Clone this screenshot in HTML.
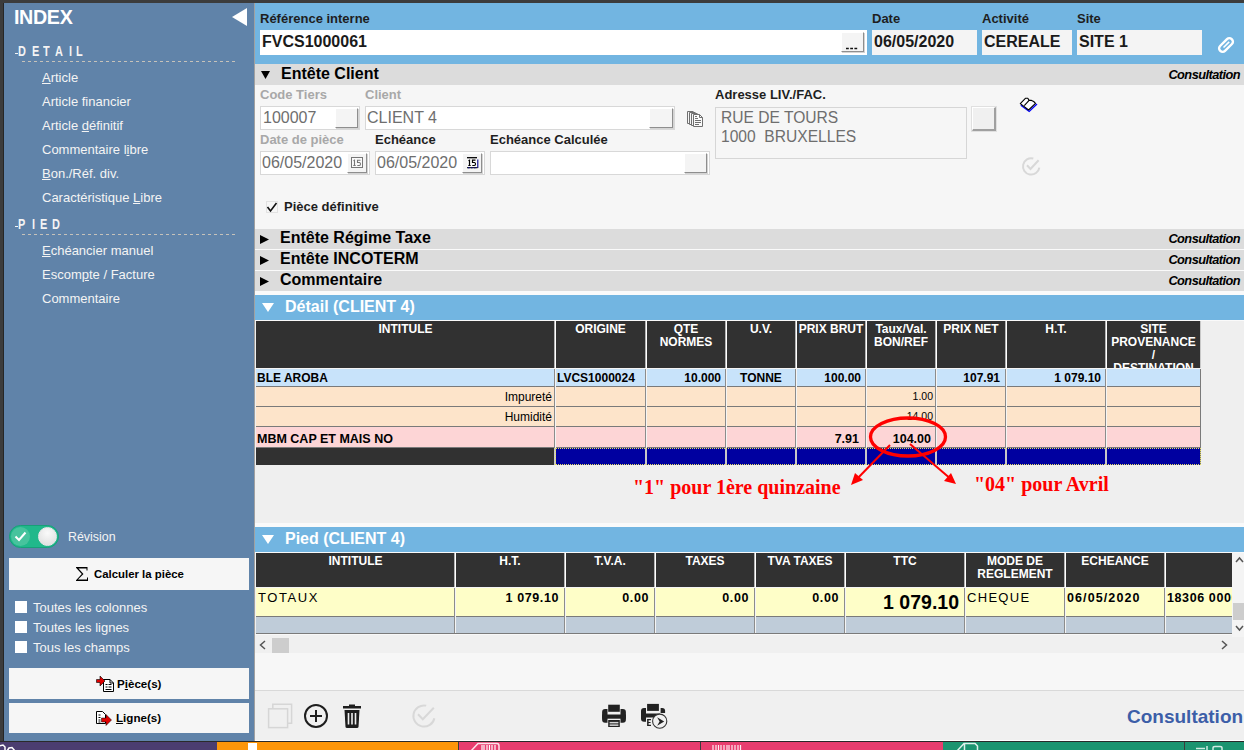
<!DOCTYPE html>
<html><head><meta charset="utf-8">
<style>
*{margin:0;padding:0;box-sizing:border-box}
html,body{width:1244px;height:750px;overflow:hidden;background:#3c3c3c;font-family:"Liberation Sans",sans-serif}
.a{position:absolute}
.t{position:absolute;white-space:nowrap;line-height:1}
#side{left:4px;top:3px;width:250px;height:738px;background:#6083a9}
#main{left:255px;top:3px;width:989px;height:738px;background:#f6f6f6}
.sl{color:#f4f4f4;font-size:13px}
.btn{position:absolute;background:#f6f6f6}
.lb{font-size:13px;font-weight:bold;color:#1e1e1e}
.b3{background:#f4f4f4;border-top:1px solid #fff;border-left:1px solid #fff;border-right:1px solid #8e8e8e;border-bottom:1px solid #8e8e8e;box-shadow:1px 1px 0 #d4d4d4}
.b3o{background:#f0f0f0;border-top:1px solid #fff;border-left:1px solid #fff;border-right:2px solid #a0a0a0;border-bottom:2px solid #a0a0a0;outline:1px solid #e0e0e0}
.band{left:255px;width:989px;background:#dcdcdc}
.bt{font-size:16px;font-weight:bold;color:#000}
.cons{font-size:12.8px;font-weight:bold;font-style:italic;color:#000;letter-spacing:-0.55px}
.inp{background:#fff;border:1px solid #d8d8d8}
.iv{font-size:16px;color:#6e6e6e}
.cal{width:12px;height:11px;border:1px solid;font-size:8px;line-height:9px;text-align:center;font-weight:bold}
.th{color:#fff;font-size:12px;font-weight:bold;text-align:center;line-height:13px;padding-top:2px;overflow:hidden}
.td{font-size:12px;font-weight:bold;color:#000}
.tc{font-size:12px;color:#000}
.tn{font-size:10.5px;color:#000}
.tm{font-size:12.5px;font-weight:bold;color:#000}
.tt{font-size:13px;color:#000;letter-spacing:1.3px}
.tp{font-size:12.5px;font-weight:bold;color:#000;letter-spacing:0.6px}
.hl{font-size:14.2px;font-weight:bold;color:#f4f4f4;transform:scaleX(0.77);transform-origin:0 0}
.dl{width:214px;height:1px;background:repeating-linear-gradient(90deg,#c6c2ba 0 3px,transparent 3px 6px)}
.cb{position:absolute;width:12px;height:12px;background:#fff}
</style></head><body>
<!-- sidebar -->
<div id="side" class="a"></div>
<div class="a" style="left:254px;top:3px;width:1px;height:738px;background:#a0a0a0"></div>
<div class="a" style="left:3px;top:3px;width:1px;height:738px;background:#262626"></div>
<div class="t" style="left:14px;top:8.3px;font-size:19.7px;font-weight:bold;color:#fff;letter-spacing:-0.35px">INDEX</div>
<svg class="a" style="left:231px;top:8px" width="17" height="19"><polygon points="16,0 16,18 1,9" fill="#fff"/></svg>

<div class="a" style="left:14.5px;top:53px;width:3.5px;height:1.3px;background:#f4f4f4"></div><div class="t hl" style="left:17.5px;top:44.2px">D</div><div class="t hl" style="left:31.5px;top:44.2px">E</div><div class="t hl" style="left:42.5px;top:44.2px">T</div><div class="t hl" style="left:54.5px;top:44.2px">A</div><div class="t hl" style="left:68.5px;top:44.2px">I</div><div class="t hl" style="left:76px;top:44.2px">L</div>
<div class="a dl" style="left:22px;top:61px"></div>
<div class="t sl" style="left:42px;top:71px"><u>A</u>rticle</div>
<div class="t sl" style="left:42px;top:95px">Article financier</div>
<div class="t sl" style="left:42px;top:119px">Article <u>d</u>éfinitif</div>
<div class="t sl" style="left:42px;top:143px">Commentaire l<u>i</u>bre</div>
<div class="t sl" style="left:42px;top:167px"><u>B</u>on./Réf. div.</div>
<div class="t sl" style="left:42px;top:191px">Caractéristique <u>L</u>ibre</div>
<div class="a" style="left:14.5px;top:226px;width:3.5px;height:1.3px;background:#f4f4f4"></div><div class="t hl" style="left:17.5px;top:217.1px">P</div><div class="t hl" style="left:31.5px;top:217.1px">I</div><div class="t hl" style="left:39.5px;top:217.1px">E</div><div class="t hl" style="left:51.5px;top:217.1px">D</div>
<div class="a dl" style="left:22px;top:234px"></div>
<div class="t sl" style="left:42px;top:244px"><u>E</u>chéancier manuel</div>
<div class="t sl" style="left:42px;top:268px">Escom<u>p</u>te / Facture</div>
<div class="t sl" style="left:42px;top:292px">Commentaire</div>

<!-- toggle -->
<div class="a" style="left:9px;top:525px;width:50px;height:23px;border-radius:12px;background:#21b88b;border:1px solid #17a078"></div>
<div class="a" style="left:11px;top:527px;width:19px;height:19px;border-radius:50%;background:#47c39d"></div>
<svg class="a" style="left:14px;top:531px" width="13" height="11"><polyline points="1.5,5.5 5,9 11.5,1.5" fill="none" stroke="#fff" stroke-width="2"/></svg>
<div class="a" style="left:38px;top:527px;width:19px;height:19px;border-radius:50%;background:radial-gradient(circle at 50% 30%,#fafafa,#dcdcdc);border:1px solid #f0e8ec"></div>
<div class="t sl" style="left:68px;top:531px;font-size:12.4px">Révision</div>

<div class="btn" style="left:9px;top:558px;width:240px;height:32px"></div>
<svg class="a" style="left:75px;top:566px" width="14" height="16" viewBox="0 0 14 16"><path d="M1,1 H12.5 V4.5 H11.5 V2.5 H3.5 L8.5,8 L3,13.5 H12 V11.5 H13 V15 H1 V14.2 L6.8,8 L1,1.8Z" fill="#000"/></svg>
<div class="t" style="left:94px;top:569px;font-size:11.4px;font-weight:bold;color:#000">Calculer la pièce</div>

<div class="cb" style="left:15px;top:601px"></div>
<div class="t sl" style="left:33px;top:601px">Toutes les colonnes</div>
<div class="cb" style="left:15px;top:621px"></div>
<div class="t sl" style="left:33px;top:621px">Toutes les lignes</div>
<div class="cb" style="left:15px;top:641px"></div>
<div class="t sl" style="left:33px;top:641px">Tous les champs</div>

<div class="btn" style="left:9px;top:668px;width:240px;height:31px"></div>
<svg class="a" style="left:96px;top:675px" width="19" height="18" viewBox="0 0 19 18"><path d="M7.5,4.5 H14 L17.5,8 V16.5 H7.5Z" fill="#fff" stroke="#000" stroke-width="1"/><path d="M14,4.5 V8 H17.5" fill="none" stroke="#000"/><path d="M9.5,9.5h2M12.5,9.5h3M9.5,12h2M12.5,12h3M9.5,14.5h6" stroke="#000" stroke-width="1"/><path d="M0.5,4.5 H4 V1 L9,6 L4,11 V7.5 H0.5Z" fill="#e00000" stroke="#000" stroke-width="0.6"/></svg>
<div class="t" style="left:117px;top:678px;font-size:11.6px;font-weight:bold;color:#000">P<u>i</u>èce(s)</div>
<div class="btn" style="left:9px;top:703px;width:240px;height:30px"></div>
<svg class="a" style="left:95px;top:710px" width="18" height="18" viewBox="0 0 18 18"><path d="M1.5,1.5 H7.5 L10.5,4.5 V13.5 H1.5Z" fill="#fff" stroke="#000" stroke-width="1"/><path d="M3.5,5h2M3.5,7.5h2M3.5,10h2M3.5,12h2" stroke="#000"/><path d="M6.5,8 H11 V4.5 L16.5,10 L11,15.5 V12 H6.5Z" fill="#e00000" stroke="#000" stroke-width="0.5"/></svg>
<div class="t" style="left:116px;top:712px;font-size:11.6px;font-weight:bold;color:#000"><u>L</u>igne(s)</div>

<!-- main -->
<div id="main" class="a"></div>
<!-- header -->
<div class="a" style="left:255px;top:3px;width:989px;height:61px;background:#72b5e1"></div>
<div class="t lb" style="left:260px;top:12px">Référence interne</div>
<div class="a" style="left:260px;top:30px;width:607px;height:25px;background:#fff"></div>
<div class="t" style="left:262px;top:34px;font-size:16px;font-weight:bold;color:#1a1a1a">FVCS1000061</div>
<div class="a b3" style="left:841px;top:32px;width:23px;height:20px"></div>
<svg class="a" style="left:845px;top:47px" width="14" height="3"><path d="M1,1.5 H3.8 M5.2,1.5 H8 M9.4,1.5 H12.2" stroke="#111" stroke-width="1.3"/></svg>
<div class="t lb" style="left:872px;top:12px">Date</div>
<div class="a" style="left:872px;top:30px;width:105px;height:25px;background:#f4f4f4"></div>
<div class="t" style="left:874px;top:34px;font-size:16px;font-weight:bold;color:#1a1a1a">06/05/2020</div>
<div class="t lb" style="left:982px;top:12px">Activité</div>
<div class="a" style="left:982px;top:30px;width:90px;height:25px;background:#f4f4f4"></div>
<div class="t" style="left:984px;top:34px;font-size:16px;font-weight:bold;color:#1a1a1a">CEREALE</div>
<div class="t lb" style="left:1077px;top:12px">Site</div>
<div class="a" style="left:1077px;top:30px;width:125px;height:25px;background:#f4f4f4"></div>
<div class="t" style="left:1079px;top:34px;font-size:16px;font-weight:bold;color:#1a1a1a">SITE 1</div>
<svg class="a" style="left:1214px;top:33px" width="24" height="24" viewBox="0 0 24 24"><g transform="rotate(45 12 12)"><rect x="8.5" y="3.8" width="7" height="16.4" rx="3.3" fill="none" stroke="#fff" stroke-width="2.4"/><line x1="12" y1="7.5" x2="12" y2="15.5" stroke="#fff" stroke-width="1.6"/></g></svg>

<!-- Entete client band -->
<div class="a band" style="top:64px;height:21px"></div>
<svg class="a" style="left:261px;top:71px" width="10" height="9"><polygon points="0,0 9,0 4.5,8" fill="#000"/></svg>
<div class="t bt" style="left:281px;top:66px">Entête Client</div>
<div class="t cons" style="right:4px;top:69px">Consultation</div>

<div class="t lb" style="left:260px;top:88px;color:#a8a8a8">Code Tiers</div>
<div class="t lb" style="left:365px;top:88px;color:#a8a8a8">Client</div>
<div class="t lb" style="left:715px;top:88px">Adresse LIV./FAC.</div>
<div class="a inp" style="left:260px;top:106px;width:100px;height:24px"></div>
<div class="a b3" style="left:335px;top:108px;width:23px;height:20px"></div>
<div class="t iv" style="left:263px;top:110px">100007</div>
<div class="a inp" style="left:365px;top:106px;width:310px;height:24px"></div>
<div class="a b3" style="left:649px;top:108px;width:24px;height:20px"></div>
<div class="t iv" style="left:367px;top:110px">CLIENT 4</div>
<svg class="a" style="left:686px;top:110px" width="18" height="18" viewBox="0 0 18 18" fill="none" stroke="#707070" stroke-width="1"><path d="M1.5,13.5 V1.5 H7.5 M1.5,13.5 H3.5"/><path d="M3.5,14.5 V2.5 H9.5 M3.5,14.5 H5.5"/><path d="M5.5,15.5 V3.5 H11.5 M5.5,15.5 H7.5"/><path d="M7.5,4.5 H13.5 L16.5,7.5 V16.5 H7.5 Z" fill="#fafafa"/><path d="M13.5,4.5 V7.5 H16.5"/><path d="M9,6.5 H11 M9,8.5 H12 M9,10.5 H15 M9,12.5 H15 M9,14.5 H13"/></svg>
<div class="a" style="left:715px;top:107px;width:252px;height:52px;border:1px solid #d6d6d6"></div>
<div class="t iv" style="left:721px;top:110px;font-size:15.6px">RUE DE TOURS</div>
<div class="t iv" style="left:721px;top:129px;font-size:15.6px">1000&nbsp; BRUXELLES</div>
<div class="a b3o" style="left:972px;top:107px;width:24px;height:24px"></div>
<svg class="a" style="left:1019px;top:97px" width="20" height="16" viewBox="0 0 20 16"><path d="M1.8,8.2 L10.2,14.4 L18,7" fill="none" stroke="#0000ff" stroke-width="1.3"/><path d="M1.3,6.6 L6.4,1.3 H8.8 L10.1,3.4 H12.5 L14.7,4.5 L16.5,6.3 L9.6,13 Z" fill="#fff" stroke="#000" stroke-width="1.1" stroke-linejoin="round"/><path d="M10.1,3.4 L5.3,8.6" stroke="#000" stroke-width="1.1"/></svg>
<svg class="a" style="left:1020px;top:155px" width="24" height="24"><path d="M19.32,12.54 A8.2,8.2 0 1 1 13.32,3.48" fill="none" stroke="#d8d8d8" stroke-width="2"/><polyline points="7.0,10.3 10.5,14.0 18.6,5.3" fill="none" stroke="#d8d8d8" stroke-width="2"/></svg>

<div class="t lb" style="left:260px;top:133px;color:#a8a8a8">Date de pièce</div>
<div class="t lb" style="left:375px;top:133px">Echéance</div>
<div class="t lb" style="left:490px;top:133px">Echéance Calculée</div>
<div class="a inp" style="left:260px;top:151px;width:110px;height:24px"></div>
<div class="a b3" style="left:347px;top:153px;width:20px;height:20px"></div>
<svg class="a" style="left:351px;top:157px" width="14" height="13" viewBox="0 0 14 13" fill="none" stroke="#777" stroke-width="1"><rect x="0.5" y="0.5" width="11" height="10" fill="#fafafa"/><path d="M2.5,3.8 L3.5,3.2 V8.5 M2.3,8.5 H4.7" stroke-width="1.1"/><path d="M9.5,3.2 H6.5 V5.5 H8.5 Q9.5,5.7 9.5,7 Q9.5,8.5 8.3,8.5 H6.3" stroke-width="1.1"/></svg>
<div class="t iv" style="left:262px;top:155px">06/05/2020</div>
<div class="a inp" style="left:375px;top:151px;width:110px;height:24px"></div>
<div class="a b3" style="left:462px;top:153px;width:20px;height:20px"></div>
<svg class="a" style="left:466px;top:157px" width="14" height="13" viewBox="0 0 14 13" fill="none" stroke="#000" stroke-width="1"><rect x="1" y="1" width="10.5" height="9.5" fill="#fafafa" stroke="none"/><path d="M1,0.7 H11" stroke-width="1.3"/><path d="M11.8,2.5 V11" stroke="#000090" stroke-width="1.1"/><path d="M1,10.7 H11.5" stroke="#000" stroke-width="1.1"/><path d="M2,10.7 H11" stroke="#000090" stroke-width="1.1" stroke-dasharray="1.5,1.5"/><path d="M2.5,3.8 L3.5,3.2 V8.5 M2.3,8.5 H4.7" stroke-width="1.2"/><path d="M9.5,3.2 H6.5 V5.5 H8.5 Q9.5,5.7 9.5,7 Q9.5,8.5 8.3,8.5 H6.3" stroke-width="1.2"/></svg>
<div class="t iv" style="left:377px;top:155px">06/05/2020</div>
<div class="a inp" style="left:490px;top:151px;width:220px;height:24px"></div>
<div class="a b3" style="left:684px;top:153px;width:23px;height:20px"></div>

<div class="a" style="left:266px;top:201px;width:12px;height:12px;background:#f6f6f6;border:1px solid #e2e2e2"></div>
<svg class="a" style="left:266px;top:201px" width="12" height="12"><polyline points="1.5,6 4.5,10 10.5,2" fill="none" stroke="#111" stroke-width="1.6"/></svg>
<div class="t lb" style="left:284px;top:200px">Pièce définitive</div>

<!-- collapsed bands -->
<div class="a band" style="top:229px;height:20px"></div>
<div class="a band" style="top:250px;height:20px"></div>
<div class="a band" style="top:271px;height:20px"></div>
<div class="a" style="left:255px;top:249px;width:989px;height:1px;background:#fafafa"></div>
<div class="a" style="left:255px;top:270px;width:989px;height:1px;background:#fafafa"></div>
<div class="a" style="left:255px;top:291px;width:989px;height:4px;background:#fafafa"></div>
<svg class="a" style="left:260px;top:235px" width="10" height="10"><polygon points="0,0 9,4.5 0,9" fill="#000"/></svg>
<svg class="a" style="left:260px;top:256px" width="10" height="10"><polygon points="0,0 9,4.5 0,9" fill="#000"/></svg>
<svg class="a" style="left:260px;top:277px" width="10" height="10"><polygon points="0,0 9,4.5 0,9" fill="#000"/></svg>
<div class="t bt" style="left:280px;top:230px">Entête Régime Taxe</div>
<div class="t bt" style="left:280px;top:251px">Entête INCOTERM</div>
<div class="t bt" style="left:280px;top:272px">Commentaire</div>
<div class="t cons" style="right:4px;top:233px">Consultation</div>
<div class="t cons" style="right:4px;top:254px">Consultation</div>
<div class="t cons" style="right:4px;top:275px">Consultation</div>

<!-- detail band -->
<div class="a" style="left:255px;top:295px;width:989px;height:25px;background:#72b5e1"></div>
<svg class="a" style="left:262px;top:303px" width="13" height="10"><polygon points="0,0 12,0 6,9" fill="#fff"/></svg>
<div class="t bt" style="left:285px;top:299px;color:#fff">Détail (CLIENT 4)</div>
<div class="a" style="left:255px;top:320px;width:989px;height:203px;background:#efefef"></div>
<div class="a" style="left:255px;top:320px;width:989px;height:1px;background:#fafafa"></div>
<!-- detail table -->
<div class="a" style="left:256px;top:321px;width:945px;height:47px;background:#313131"></div>
<div class="a" style="left:554px;top:321px;width:1px;height:47px;background:#b4b4b4"></div>
<div class="a" style="left:555px;top:321px;width:1px;height:47px;background:#fff"></div>
<div class="a" style="left:645px;top:321px;width:1px;height:47px;background:#b4b4b4"></div>
<div class="a" style="left:646px;top:321px;width:1px;height:47px;background:#fff"></div>
<div class="a" style="left:725px;top:321px;width:1px;height:47px;background:#b4b4b4"></div>
<div class="a" style="left:726px;top:321px;width:1px;height:47px;background:#fff"></div>
<div class="a" style="left:795px;top:321px;width:1px;height:47px;background:#b4b4b4"></div>
<div class="a" style="left:796px;top:321px;width:1px;height:47px;background:#fff"></div>
<div class="a" style="left:865px;top:321px;width:1px;height:47px;background:#b4b4b4"></div>
<div class="a" style="left:866px;top:321px;width:1px;height:47px;background:#fff"></div>
<div class="a" style="left:935px;top:321px;width:1px;height:47px;background:#b4b4b4"></div>
<div class="a" style="left:936px;top:321px;width:1px;height:47px;background:#fff"></div>
<div class="a" style="left:1005px;top:321px;width:1px;height:47px;background:#b4b4b4"></div>
<div class="a" style="left:1006px;top:321px;width:1px;height:47px;background:#fff"></div>
<div class="a" style="left:1105px;top:321px;width:1px;height:47px;background:#b4b4b4"></div>
<div class="a" style="left:1106px;top:321px;width:1px;height:47px;background:#fff"></div>
<div class="a" style="left:1200px;top:321px;width:1px;height:47px;background:#c8c8c8"></div>
<div class="a" style="left:255px;top:368px;width:946px;height:1px;background:#f4f4f4"></div>
<div class="a th" style="left:257px;top:321px;width:297px;height:47px">INTITULE</div>
<div class="a th" style="left:556px;top:321px;width:89px;height:47px">ORIGINE</div>
<div class="a th" style="left:647px;top:321px;width:78px;height:47px">QTE<br>NORMES</div>
<div class="a th" style="left:727px;top:321px;width:68px;height:47px">U.V.</div>
<div class="a th" style="left:797px;top:321px;width:68px;height:47px">PRIX BRUT</div>
<div class="a th" style="left:867px;top:321px;width:68px;height:47px">Taux/Val.<br>BON/REF</div>
<div class="a th" style="left:937px;top:321px;width:68px;height:47px">PRIX NET</div>
<div class="a th" style="left:1007px;top:321px;width:98px;height:47px">H.T.</div>
<div class="a th" style="left:1107px;top:321px;width:93px;height:47px">SITE<br>PROVENANCE<br>/<br>DESTINATION</div>
<div class="a" style="left:256px;top:369px;width:945px;height:17px;background:#c8e3fa"></div>
<div class="a" style="left:256px;top:386px;width:945px;height:1px;background:#7a7a7a"></div>
<div class="a" style="left:256px;top:387px;width:945px;height:19px;background:#fde4ca"></div>
<div class="a" style="left:256px;top:406px;width:945px;height:1px;background:#7a7a7a"></div>
<div class="a" style="left:256px;top:407px;width:945px;height:19px;background:#fde4ca"></div>
<div class="a" style="left:256px;top:426px;width:945px;height:1px;background:#7a7a7a"></div>
<div class="a" style="left:256px;top:427px;width:945px;height:20px;background:#fdd5d6"></div>
<div class="a" style="left:256px;top:447px;width:945px;height:1px;background:#7a7a7a"></div>
<div class="a" style="left:256px;top:448px;width:945px;height:17px;background:#0000a0"></div>
<div class="a" style="left:256px;top:448px;width:298px;height:17px;background:#313131"></div>
<div class="a" style="left:554px;top:369px;width:1px;height:79px;background:#8c8c8c"></div>
<div class="a" style="left:555px;top:369px;width:1px;height:79px;background:#f4f4f4"></div>
<div class="a" style="left:554px;top:448px;width:2px;height:17px;background:#c8c8c8"></div>
<div class="a" style="left:645px;top:369px;width:1px;height:79px;background:#8c8c8c"></div>
<div class="a" style="left:646px;top:369px;width:1px;height:79px;background:#f4f4f4"></div>
<div class="a" style="left:645px;top:448px;width:2px;height:17px;background:#c8c8c8"></div>
<div class="a" style="left:725px;top:369px;width:1px;height:79px;background:#8c8c8c"></div>
<div class="a" style="left:726px;top:369px;width:1px;height:79px;background:#f4f4f4"></div>
<div class="a" style="left:725px;top:448px;width:2px;height:17px;background:#c8c8c8"></div>
<div class="a" style="left:795px;top:369px;width:1px;height:79px;background:#8c8c8c"></div>
<div class="a" style="left:796px;top:369px;width:1px;height:79px;background:#f4f4f4"></div>
<div class="a" style="left:795px;top:448px;width:2px;height:17px;background:#c8c8c8"></div>
<div class="a" style="left:865px;top:369px;width:1px;height:79px;background:#8c8c8c"></div>
<div class="a" style="left:866px;top:369px;width:1px;height:79px;background:#f4f4f4"></div>
<div class="a" style="left:865px;top:448px;width:2px;height:17px;background:#c8c8c8"></div>
<div class="a" style="left:935px;top:369px;width:1px;height:79px;background:#8c8c8c"></div>
<div class="a" style="left:936px;top:369px;width:1px;height:79px;background:#f4f4f4"></div>
<div class="a" style="left:935px;top:448px;width:2px;height:17px;background:#c8c8c8"></div>
<div class="a" style="left:1005px;top:369px;width:1px;height:79px;background:#8c8c8c"></div>
<div class="a" style="left:1006px;top:369px;width:1px;height:79px;background:#f4f4f4"></div>
<div class="a" style="left:1005px;top:448px;width:2px;height:17px;background:#c8c8c8"></div>
<div class="a" style="left:1105px;top:369px;width:1px;height:79px;background:#8c8c8c"></div>
<div class="a" style="left:1106px;top:369px;width:1px;height:79px;background:#f4f4f4"></div>
<div class="a" style="left:1105px;top:448px;width:2px;height:17px;background:#c8c8c8"></div>
<div class="a" style="left:1200px;top:369px;width:1px;height:96px;background:#7a7a7a"></div>
<div class="a" style="left:555px;top:448px;width:646px;height:17px;border:1px dotted #e8e060"></div>
<div class="t td" style="left:257px;top:372px">BLE AROBA</div>
<div class="t td" style="left:557px;top:372px">LVCS1000024</div>
<div class="t td" style="right:523px;top:372px">10.000</div>
<div class="t td" style="left:727px;width:68px;text-align:center;top:372px">TONNE</div>
<div class="t td" style="right:383px;top:372px">100.00</div>
<div class="t td" style="right:244px;top:372px">107.91</div>
<div class="t td" style="right:143px;top:372px">1 079.10</div>
<div class="t tc" style="right:692px;top:391px">Impureté</div>
<div class="t tn" style="right:311px;top:391px">1.00</div>
<div class="t tc" style="right:692px;top:411px">Humidité</div>
<div class="t tn" style="right:311px;top:411px">14.00</div>
<div class="t tm" style="left:257px;top:433px">MBM CAP ET MAIS NO</div>
<div class="t tm" style="right:385px;top:433px">7.91</div>
<div class="t tm" style="right:313px;top:433px">104.00</div>

<!--/detail table-->
<!-- annotation -->
<svg class="a" style="left:255px;top:320px" width="989" height="203" viewBox="255 320 989 203">
<defs><marker id="ah" markerWidth="8" markerHeight="8" refX="7" refY="4" orient="auto" markerUnits="userSpaceOnUse"><polygon points="0,0 8,4 0,8" fill="#ff0000"/></marker></defs>
<ellipse cx="908" cy="437" rx="37.5" ry="19" fill="none" stroke="#ff0000" stroke-width="3.3"/>
<line x1="890" y1="445" x2="855" y2="481" stroke="#ff0000" stroke-width="2"/>
<polygon points="851,485 855,473 863,480" fill="#ff0000"/>
<line x1="910" y1="444" x2="952" y2="480" stroke="#ff0000" stroke-width="2"/>
<polygon points="956,484 944,481 951,473" fill="#ff0000"/>
</svg>
<div class="t" style="left:633px;top:477px;font-family:'Liberation Serif',serif;font-size:20px;font-weight:bold;color:#ff0000">"1" pour 1ère quinzaine</div>
<div class="t" style="left:974px;top:474px;font-family:'Liberation Serif',serif;font-size:20px;font-weight:bold;color:#ff0000">"04" pour Avril</div>

<!-- pied band -->
<div class="a" style="left:255px;top:523px;width:989px;height:4px;background:#fafafa"></div>
<div class="a" style="left:255px;top:527px;width:989px;height:25px;background:#72b5e1"></div>
<div class="a" style="left:255px;top:552px;width:989px;height:1px;background:#fafafa"></div>
<svg class="a" style="left:262px;top:535px" width="13" height="10"><polygon points="0,0 12,0 6,9" fill="#fff"/></svg>
<div class="t bt" style="left:285px;top:531px;color:#fff">Pied (CLIENT 4)</div>
<div class="a" style="left:255px;top:553px;width:989px;height:101px;background:#f0f0f0"></div>
<!-- pied table -->
<div class="a" style="left:256px;top:553px;width:976px;height:34px;background:#313131"></div>
<div class="a" style="left:454px;top:553px;width:1px;height:34px;background:#b4b4b4"></div>
<div class="a" style="left:455px;top:553px;width:1px;height:34px;background:#fff"></div>
<div class="a" style="left:564px;top:553px;width:1px;height:34px;background:#b4b4b4"></div>
<div class="a" style="left:565px;top:553px;width:1px;height:34px;background:#fff"></div>
<div class="a" style="left:654px;top:553px;width:1px;height:34px;background:#b4b4b4"></div>
<div class="a" style="left:655px;top:553px;width:1px;height:34px;background:#fff"></div>
<div class="a" style="left:754px;top:553px;width:1px;height:34px;background:#b4b4b4"></div>
<div class="a" style="left:755px;top:553px;width:1px;height:34px;background:#fff"></div>
<div class="a" style="left:844px;top:553px;width:1px;height:34px;background:#b4b4b4"></div>
<div class="a" style="left:845px;top:553px;width:1px;height:34px;background:#fff"></div>
<div class="a" style="left:964px;top:553px;width:1px;height:34px;background:#b4b4b4"></div>
<div class="a" style="left:965px;top:553px;width:1px;height:34px;background:#fff"></div>
<div class="a" style="left:1064px;top:553px;width:1px;height:34px;background:#b4b4b4"></div>
<div class="a" style="left:1065px;top:553px;width:1px;height:34px;background:#fff"></div>
<div class="a" style="left:1164px;top:553px;width:1px;height:34px;background:#b4b4b4"></div>
<div class="a" style="left:1165px;top:553px;width:1px;height:34px;background:#fff"></div>
<div class="a" style="left:255px;top:587px;width:977px;height:1px;background:#f4f4f4"></div>
<div class="a th" style="left:257px;top:553px;width:197px;height:34px">INTITULE</div>
<div class="a th" style="left:456px;top:553px;width:108px;height:34px">H.T.</div>
<div class="a th" style="left:566px;top:553px;width:88px;height:34px">T.V.A.</div>
<div class="a th" style="left:656px;top:553px;width:98px;height:34px">TAXES</div>
<div class="a th" style="left:756px;top:553px;width:88px;height:34px">TVA TAXES</div>
<div class="a th" style="left:846px;top:553px;width:118px;height:34px">TTC</div>
<div class="a th" style="left:966px;top:553px;width:98px;height:34px">MODE DE<br>REGLEMENT</div>
<div class="a th" style="left:1066px;top:553px;width:98px;height:34px">ECHEANCE</div>
<div class="a th" style="left:1166px;top:553px;width:66px;height:34px"></div>
<div class="a" style="left:256px;top:588px;width:976px;height:28px;background:#fefec8"></div>
<div class="a" style="left:256px;top:616px;width:976px;height:1px;background:#7a7a7a"></div>
<div class="a" style="left:256px;top:617px;width:976px;height:16px;background:#bfccd9"></div>
<div class="a" style="left:256px;top:633px;width:976px;height:1px;background:#7a7a7a"></div>
<div class="a" style="left:454px;top:588px;width:1px;height:45px;background:#8c8c8c"></div>
<div class="a" style="left:455px;top:588px;width:1px;height:45px;background:#f4f4f4"></div>
<div class="a" style="left:564px;top:588px;width:1px;height:45px;background:#8c8c8c"></div>
<div class="a" style="left:565px;top:588px;width:1px;height:45px;background:#f4f4f4"></div>
<div class="a" style="left:654px;top:588px;width:1px;height:45px;background:#8c8c8c"></div>
<div class="a" style="left:655px;top:588px;width:1px;height:45px;background:#f4f4f4"></div>
<div class="a" style="left:754px;top:588px;width:1px;height:45px;background:#8c8c8c"></div>
<div class="a" style="left:755px;top:588px;width:1px;height:45px;background:#f4f4f4"></div>
<div class="a" style="left:844px;top:588px;width:1px;height:45px;background:#8c8c8c"></div>
<div class="a" style="left:845px;top:588px;width:1px;height:45px;background:#f4f4f4"></div>
<div class="a" style="left:964px;top:588px;width:1px;height:45px;background:#8c8c8c"></div>
<div class="a" style="left:965px;top:588px;width:1px;height:45px;background:#f4f4f4"></div>
<div class="a" style="left:1064px;top:588px;width:1px;height:45px;background:#8c8c8c"></div>
<div class="a" style="left:1065px;top:588px;width:1px;height:45px;background:#f4f4f4"></div>
<div class="a" style="left:1164px;top:588px;width:1px;height:45px;background:#8c8c8c"></div>
<div class="a" style="left:1165px;top:588px;width:1px;height:45px;background:#f4f4f4"></div>
<div class="a" style="left:255px;top:634px;width:977px;height:1px;background:#f8f8f8"></div>
<div class="t tt" style="left:258px;top:591px"><span style="letter-spacing:1.6px">TOTAUX</span></div>
<div class="t tp" style="right:685px;top:592px">1 079.10</div>
<div class="t tp" style="right:595px;top:592px">0.00</div>
<div class="t tp" style="right:495px;top:592px">0.00</div>
<div class="t tp" style="right:405px;top:592px">0.00</div>
<div class="t" style="right:285px;top:593px;font-size:19.5px;font-weight:bold;color:#000">1 079.10</div>
<div class="t tt" style="left:967px;top:591px">CHEQUE</div>
<div class="t tp" style="left:1067px;top:592px"><span style="letter-spacing:1.1px">06/05/2020</span></div>
<div class="a" style="left:1166px;top:588px;width:66px;height:28px;overflow:hidden"><div class="t tp" style="left:1px;top:4px">18306 000000</div></div>

<!-- scrollbars -->
<div class="a" style="left:1232px;top:553px;width:12px;height:84px;background:#f4f4f4"></div>
<svg class="a" style="left:1235px;top:556px" width="9" height="9"><polyline points="1,6 4.5,2 8,6" fill="none" stroke="#555" stroke-width="1.5"/></svg>
<div class="a" style="left:1233px;top:603px;width:11px;height:17px;background:#cdcdcd"></div>
<svg class="a" style="left:1235px;top:624px" width="9" height="9"><polyline points="1,2 4.5,6 8,2" fill="none" stroke="#555" stroke-width="1.5"/></svg>
<div class="a" style="left:255px;top:636px;width:977px;height:17px;background:#f0f0f0"></div>
<svg class="a" style="left:258px;top:640px" width="9" height="10"><polyline points="7,1 2.5,5 7,9" fill="none" stroke="#555" stroke-width="1.5"/></svg>
<div class="a" style="left:272px;top:638px;width:17px;height:15px;background:#cdcdcd"></div>
<svg class="a" style="left:1220px;top:640px" width="9" height="10"><polyline points="2,1 6.5,5 2,9" fill="none" stroke="#555" stroke-width="1.5"/></svg>
<div class="a" style="left:255px;top:653px;width:989px;height:38px;background:#f7f7f7"></div>
<!-- toolbar -->
<div class="a" style="left:255px;top:690px;width:989px;height:1px;background:#d9d9d9"></div>
<div class="a" style="left:255px;top:691px;width:989px;height:50px;background:#f0f0f0"></div>
<svg class="a" style="left:267px;top:703px" width="26" height="26" viewBox="0 0 26 26" fill="none" stroke="#d6d6d6" stroke-width="1.5"><path d="M5.8,5.6 V1.3 H24.6 V20.3 H20.8"/><rect x="1.6" y="5.8" width="19" height="18.8"/></svg>
<svg class="a" style="left:303px;top:703px" width="26" height="26" viewBox="0 0 26 26" fill="none" stroke="#1e1e1e" stroke-width="2"><circle cx="13" cy="13" r="11"/><path d="M13,7 V19 M7,13 H19"/></svg>
<svg class="a" style="left:342px;top:703px" width="20" height="26" viewBox="0 0 20 26"><path d="M1,3 H19 V5.5 H1Z M7,1.5 H13 V3 H7Z" fill="#1e1e1e"/><path d="M2.5,7 H17.5 L16.5,24 Q16.3,25 15,25 H5 Q3.7,25 3.5,24Z" fill="#1e1e1e"/><path d="M6.5,10 V21.5 M10,10 V21.5 M13.5,10 V21.5" stroke="#f0f0f0" stroke-width="1.6"/></svg>
<svg class="a" style="left:410px;top:702px" width="28" height="28"><path d="M24.37,16.20 A10.6,10.6 0 1 1 16.20,3.63" fill="none" stroke="#d8d8d8" stroke-width="2"/><polyline points="8.0,12.3 12.8,17.3 23.8,5.7" fill="none" stroke="#d8d8d8" stroke-width="2"/></svg>
<svg class="a" style="left:601px;top:704px" width="26" height="24" viewBox="0 0 26 24" fill="#222"><rect x="7.2" y="0.7" width="11.6" height="7.1"/><path d="M4.1,4.9 H6.5 V18.8 H4.1 Q1.1,18.8 1.1,15.8 V7.9 Q1.1,4.9 4.1,4.9Z"/><path d="M21.9,4.9 H19.5 V18.8 H21.9 Q24.9,18.8 24.9,15.8 V7.9 Q24.9,4.9 21.9,4.9Z"/><rect x="1.1" y="10.5" width="23.8" height="4.2"/><rect x="7.2" y="16" width="11.6" height="7"/><rect x="8.6" y="17.9" width="8.8" height="1.5" fill="#d4d4d4"/><rect x="8.6" y="20.4" width="8.8" height="1.5" fill="#d4d4d4"/></svg>
<svg class="a" style="left:640px;top:703px" width="28" height="27" viewBox="0 0 28 27" fill="#222"><rect x="7.1" y="0.9" width="11.8" height="7"/><path d="M4,5 H6 V18.8 H4 Q1,18.8 1,15.8 V8 Q1,5 4,5Z"/><path d="M20.6,5 H22.1 Q25.1,5 25.1,8 V10 H20.6Z"/><rect x="1" y="10.5" width="19" height="4"/><path d="M7.1,15.9 H11 V17.2 H8.6 V18.9 H10.6 V20.1 H8.6 V21.8 H11 V23 H7.1Z"/><circle cx="19.7" cy="18.2" r="7.1" fill="#f0f0f0" stroke="#333" stroke-width="1.1"/><path d="M17.1,14.3 L24.2,18.5 L17.1,22.7 L19.6,18.5Z"/></svg>
<div class="t" style="left:1127px;top:707px;font-size:19px;font-weight:bold;color:#3c5ea8">Consultation</div>



<!-- bottom strip -->
<div class="a" style="left:0;top:741px;width:1244px;height:1px;background:#2a2a2a"></div>
<div class="a" style="left:0;top:742px;width:217px;height:8px;background:#4b3d70"></div>
<div class="a" style="left:217px;top:742px;width:241px;height:8px;background:#fd960a"></div><div class="a" style="left:248px;top:743px;width:9px;height:7px;background:#fff"></div>
<div class="a" style="left:459px;top:742px;width:241px;height:8px;background:#e83e6f"></div>
<div class="a" style="left:701px;top:742px;width:242px;height:8px;background:#e83e6f"></div>
<div class="a" style="left:943px;top:742px;width:241px;height:8px;background:#1b9470"></div>
<div class="a" style="left:1185px;top:742px;width:59px;height:8px;background:#1b9470"></div>

<div class="a" style="left:255px;top:740px;width:989px;height:1px;background:#fff"></div>
<svg class="a" style="left:0;top:742px" width="1244" height="8" viewBox="0 742 1244 8" fill="none" stroke="#fff" stroke-width="1.5">
<path d="M-1,746 L3,745 L5,747 V751" />
<path d="M7,751 L9,748 L12,747.5 L15,751" />
<path d="M471,751 L478,743.5 H497 Q499,743.5 499,746 V751" opacity="0.85"/>
<path d="M482,745 V751 M484,745 V751 M487,745 V751 M489.5,745 V751 M492,745 V751 M495,745 V751" stroke-width="1.2"/>
<path d="M713,745 V751 M716,745 V751 M718.5,745 V751 M721,745 V751 M724,745 V751 M727,745 V751 M729,745 V751 M732,745 V751 M735,745 V751 M738,745 V751 M740.5,745 V751" stroke-width="1.2" opacity="0.9"/>
<path d="M957,751 L964,743.5 H975 L977.5,746 V751 M964.5,744 V751" opacity="0.85"/>
<path d="M1196,748.5 H1205 M1207,746 V751 M1213,751 V748 Q1213,746.5 1215,746.5 H1220 Q1222,746.5 1222,748 V751" opacity="0.8"/>
</svg>
</body></html>
